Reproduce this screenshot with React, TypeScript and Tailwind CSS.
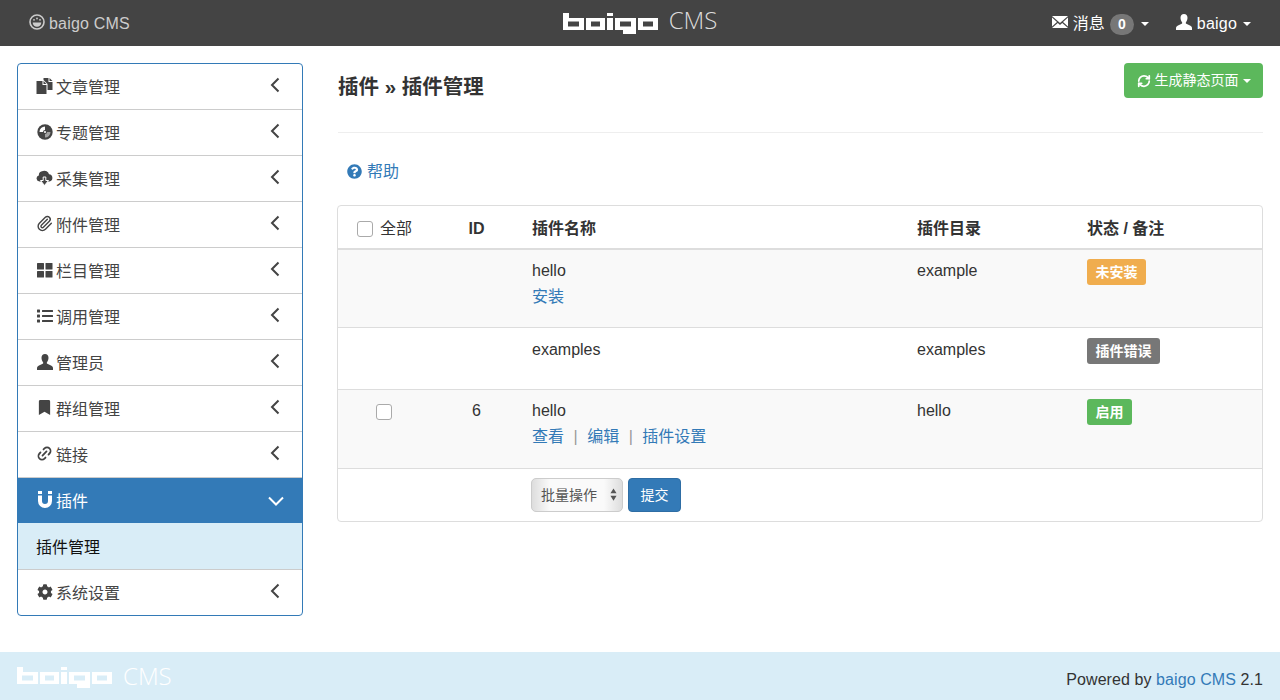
import React from "react";
import { FaBookmark, FaCog, FaQuestionCircle, FaList } from "react-icons/fa";
import { Paperclip, RefreshCw, Link2 } from "lucide-react";

function Logo({ className }: { className: string }) {
  const d =
    "M0 0h6v5h15v12H0z M5 8.500v5h11v-5z " +
    "M23 5h19v12H23z M28 8.500v5h9v-5z " +
    "M44 0h6v3h-6z M44 5h6v12h-6z " +
    "M52 5h21v16H60v-4h-8z M57 8.500v5h11v-5z " +
    "M75 5h20v12H75z M80 8.500v5h10v-5z";
  return (
    <svg viewBox="0 0 95 21" width="95" height="21" className={className}>
      <path d={d} fill="currentColor" fillRule="evenodd" />
    </svg>
  );
}

const Duplicate = () => (
  <svg viewBox="0 0 16 16" className="w-[17px] h-[16px]" fill="currentColor">
    <path d="M0 3h6v4h4v9H0z" />
    <path d="M7 3l3 3H7z" />
    <path d="M7 0h5v4h4v8h-5V6L7 2z" />
    <path d="M13 0l3 3h-3z" />
  </svg>
);
const Disc = () => (
  <svg viewBox="0 0 16 16" className="w-[16px] h-[16px]">
    <circle cx="8" cy="8" r="7.700" fill="currentColor" />
    <path d="M8 2.500A5.500 5.500 0 0 0 2.500 8H6a2 2 0 0 1 2-2z" fill="#fff" />
    <path d="M8 13.500A5.500 5.500 0 0 0 13.500 8H10a2 2 0 0 1-2 2z" fill="#fff" opacity="0.500" />
    <circle cx="8" cy="8" r="1" fill="#fff" />
  </svg>
);
const CloudDown = () => (
  <svg viewBox="0 0 17 16" className="w-[17px] h-[16px]">
    <path d="M3.500 11.500a3 3 0 0 1-.7-5.900A4.500 4.500 0 0 1 7 1a4.600 4.600 0 0 1 6 3.200 3.700 3.700 0 0 1 .5 7.300z" fill="currentColor" />
    <path d="M4.500 10.500h2.700V7h2.600v3.500h2.700L8.500 15.500z" fill="currentColor" stroke="#fff" strokeWidth="1" />
  </svg>
);
const Grid = () => (
  <svg viewBox="0 0 16 16" className="w-[16px] h-[16px]" fill="currentColor">
    <rect x="0" y="1" width="7" height="6.500" rx="0.500" />
    <rect x="8.500" y="1" width="7" height="6.500" rx="0.500" />
    <rect x="0" y="9" width="7" height="6.500" rx="0.500" />
    <rect x="8.500" y="9" width="7" height="6.500" rx="0.500" />
  </svg>
);
const Magnet = () => (
  <svg viewBox="0 0 14 17" className="w-[14px] h-[17px]" fill="currentColor">
    <path d="M0 0h4v3H0z M10 0h4v3h-4z" />
    <path d="M0 4.500h4V10a3 3 0 0 0 6 0V4.500h4V10a7 7 0 0 1-14 0z" />
  </svg>
);
const Envelope = () => (
  <svg viewBox="0 0 16 12" className="w-[16px] h-[12px]" fill="currentColor">
    <path d="M0 0h16L8 7z" />
    <path d="M0 1.500V10.500L5 6z" />
    <path d="M16 1.500V10.500L11 6z" />
    <path d="M0 12l5.800-5L8 9l2.200-2L16 12z" />
  </svg>
);
const User = ({ className }: { className: string }) => (
  <svg viewBox="0 0 16 16" className={className} fill="currentColor">
    <path d="M8 0c2.200 0 3.500 1.500 3.500 3.800 0 1.800-.7 3.500-1.500 4.400-.4.500-.3 1.200.3 1.500l3.700 1.800c1 .5 2 1.300 2 2.500V16H0v-2c0-1.200 1-2 2-2.500l3.700-1.800c.6-.3.700-1 .3-1.500-.8-.9-1.500-2.600-1.500-4.400C4.500 1.500 5.800 0 8 0z" />
  </svg>
);
const Dashboard = () => (
  <svg viewBox="0 0 16 16" className="w-[16px] h-[16px]" fill="none" stroke="currentColor">
    <circle cx="8" cy="8" r="7" strokeWidth="1.600" />
    <path d="M3.700 8.500h8.600a4.300 4.300 0 0 1-8.600 0z" fill="currentColor" stroke="none" />
    <circle cx="5" cy="5.800" r="0.900" fill="currentColor" stroke="none" />
    <circle cx="8" cy="4.500" r="0.900" fill="currentColor" stroke="none" />
    <circle cx="11" cy="5.800" r="0.900" fill="currentColor" stroke="none" />
  </svg>
);

const Caret = ({ className = "" }: { className?: string }) => (
  <span className={`inline-block w-0 h-0 border-x-[4px] border-x-transparent border-t-[4px] border-t-current ${className}`} />
);

const ChevronLeft = () => (
  <svg viewBox="0 0 10 16" className="w-[10px] h-[16px]" fill="none" stroke="#444" strokeWidth="2">
    <path d="M8.500 1.500L2 8l6.500 6.500" />
  </svg>
);
const ChevronDown = () => (
  <svg viewBox="0 0 16 10" className="w-[16px] h-[10px]" fill="none" stroke="#fff" strokeWidth="2">
    <path d="M1 1.500L8 8.500l7-7" />
  </svg>
);

const menu: { icon: React.ReactNode; label: string }[] = [
  { icon: <Duplicate />, label: "文章管理" },
  { icon: <Disc />, label: "专题管理" },
  { icon: <CloudDown />, label: "采集管理" },
  { icon: <Paperclip className="w-[17px] h-[17px]" strokeWidth={2} />, label: "附件管理" },
  { icon: <Grid />, label: "栏目管理" },
  { icon: <FaList className="w-[16px] h-[16px]" />, label: "调用管理" },
  { icon: <User className="w-[16px] h-[16px]" />, label: "管理员" },
  { icon: <FaBookmark className="w-[13px] h-[15px]" />, label: "群组管理" },
  { icon: <Link2 className="w-[17px] h-[17px] -rotate-[45deg]" strokeWidth={2.5} />, label: "链接" },
];

function MenuItem({ icon, label }: { icon: React.ReactNode; label: string }) {
  return (
    <div className="h-[46px] border-b border-[#ccc] flex items-center pl-[18px] pr-[22px] text-[#444]">
      <span className="w-[17px] flex justify-center shrink-0 -mt-[2px]">{icon}</span>
      <span className="ml-[3px] flex-1 pt-[2px]">{label}</span>
      <span className="-mt-[4px]"><ChevronLeft /></span>
    </div>
  );
}

const Sep = () => <span className="text-[#999] mx-[9.5px]">|</span>;

function Badge({ color, children }: { color: string; children: React.ReactNode }) {
  return (
    <span className={`inline-block h-[26px] leading-[26px] px-[8.5px] rounded-[3px] text-white text-[14px] font-bold ${color}`}>
      {children}
    </span>
  );
}

export default function App() {
  return (
    <div className="min-h-[700px] flex flex-col bg-white text-[16px] text-[#333] font-['Liberation_Sans','Noto_Sans_CJK_SC',sans-serif]">
      <header className="h-[46px] bg-[#444] flex items-center relative text-[#ddd] shrink-0">
        <div className="flex items-center pl-[29px] gap-[4px] text-[#ccc] flex-1">
          <span className="-mt-[2px]"><Dashboard /></span>
          <span className="pt-[1px] tracking-[0.2px]">baigo CMS</span>
        </div>
        <div className="flex items-center text-white">
          <Logo className="block mt-[1px]" />
          <span className="ml-[11px] text-[24px] font-light font-['Open_Sans',sans-serif] text-[#ddd] -mt-[7px]">CMS</span>
        </div>
        <div className="flex-1 flex justify-end items-center pr-[29px] text-white">
          <span className="-mt-[3px]"><Envelope /></span>
          <span className="ml-[5px] pt-[2px]">消息</span>
          <span className="ml-[5px] w-[24px] h-[21px] rounded-full bg-[#777] text-[14px] font-bold flex items-center justify-center mt-[2px]">0</span>
          <Caret className="ml-[7px] mt-[2px]" />
          <span className="ml-[27px] -mt-[3px]"><User className="w-[16px] h-[16px]" /></span>
          <span className="ml-[5px] pt-[2px] tracking-[0.2px]">baigo</span>
          <Caret className="ml-[6px] mt-[2px]" />
        </div>
      </header>

      <div className="flex-1 flex items-start pt-[17px] px-[17px] gap-[35px]">
        <nav className="w-[286px] shrink-0 border border-[#337ab7] rounded-[4px] overflow-hidden">
          {menu.map((m) => (
            <MenuItem key={m.label} icon={m.icon} label={m.label} />
          ))}
          <div className="h-[45px] bg-[#337ab7] text-white flex items-center pl-[18px] pr-[18px]">
            <span className="w-[17px] flex justify-center shrink-0 -mt-[2px]"><Magnet /></span>
            <span className="ml-[3px] flex-1 pt-[2px]">插件</span>
            <ChevronDown />
          </div>
          <div className="h-[47px] bg-[#d9edf7] border-b border-[#ccc] flex items-center pl-[18px] text-[#111] pt-[4px]">插件管理</div>
          <div className="h-[45px] flex items-center pl-[18px] pr-[22px] text-[#444]">
            <span className="w-[17px] flex justify-center shrink-0 -mt-[2px]"><FaCog className="w-[16px] h-[16px]" /></span>
            <span className="ml-[3px] flex-1 pt-[2px]">系统设置</span>
            <span className="-mt-[4px]"><ChevronLeft /></span>
          </div>
        </nav>

        <main className="flex-1 min-w-0">
          <div className="h-[70px] border-b border-[#eee] flex justify-between items-start">
            <h1 className="mt-[10px] text-[20.5px] leading-[28px] font-bold text-[#333]">插件 » 插件管理</h1>
            <button className="w-[139px] h-[35px] rounded-[4px] bg-[#5cb85c] text-white text-[14px] flex items-center justify-center">
              <RefreshCw className="w-[14px] h-[14px]" strokeWidth={3} />
              <span className="ml-[4px]">生成静态页面</span>
              <Caret className="ml-[4px]" />
            </button>
          </div>

          <div className="mt-[26px] pl-[9px] flex items-center text-[#337ab7] leading-[26px]">
            <span className="-mt-[2px]"><FaQuestionCircle className="w-[15px] h-[15px]" /></span>
            <span className="ml-[5px]">帮助</span>
          </div>

          <div className="mt-[20px] -ml-px border border-[#ddd] rounded-[4px] overflow-hidden">
            <table className="w-full table-fixed">
              <colgroup>
                <col className="w-[91px]" />
                <col className="w-[95px]" />
                <col className="w-[385px]" />
                <col className="w-[170px]" />
                <col />
              </colgroup>
              <thead>
                <tr className="h-[43px] border-b-2 border-[#ddd] font-bold text-left">
                  <th className="font-normal pt-[3px]">
                    <label className="flex items-center pl-[19px] gap-[7px]">
                      <span className="w-[16px] h-[16px] rounded-[3px] border border-[#aaa] bg-white" />
                      <span>全部</span>
                    </label>
                  </th>
                  <th className="text-center pt-[3px]">ID</th>
                  <th className="px-[8px] pt-[3px]">插件名称</th>
                  <th className="px-[8px] pt-[3px]">插件目录</th>
                  <th className="px-[8px] pt-[3px]">状态 / 备注</th>
                </tr>
              </thead>
              <tbody className="leading-[26px] align-top">
                <tr className="h-[78px] bg-[#f9f9f9] border-b border-[#ddd]">
                  <td />
                  <td />
                  <td className="px-[8px] pt-[8px]">
                    <div>hello</div>
                    <div className="text-[#337ab7]">安装</div>
                  </td>
                  <td className="px-[8px] pt-[8px]">example</td>
                  <td className="px-[8px] pt-[9px]"><Badge color="bg-[#f0ad4e]">未安装</Badge></td>
                </tr>
                <tr className="h-[62px] border-b border-[#ddd]">
                  <td />
                  <td />
                  <td className="px-[8px] pt-[9px]">examples</td>
                  <td className="px-[8px] pt-[9px]">examples</td>
                  <td className="px-[8px] pt-[10px]"><Badge color="bg-[#777]">插件错误</Badge></td>
                </tr>
                <tr className="h-[79px] bg-[#f9f9f9] border-b border-[#ddd]">
                  <td className="pt-[14px]">
                    <span className="block ml-[38px] w-[16px] h-[16px] rounded-[3px] border border-[#aaa] bg-white" />
                  </td>
                  <td className="text-center pt-[8px]">6</td>
                  <td className="px-[8px] pt-[8px]">
                    <div>hello</div>
                    <div className="text-[#337ab7]">
                      <span>查看</span><Sep /><span>编辑</span><Sep /><span>插件设置</span>
                    </div>
                  </td>
                  <td className="px-[8px] pt-[8px]">hello</td>
                  <td className="px-[8px] pt-[9px]"><Badge color="bg-[#5cb85c]">启用</Badge></td>
                </tr>
                <tr className="h-[53px]">
                  <td />
                  <td />
                  <td colSpan={3} className="px-[7px] pt-[9px]">
                    <div className="flex items-center gap-[5px]">
                      <div className="relative w-[92px] h-[34px]">
                        <select className="appearance-none w-full h-full pl-[9px] rounded-[5px] border border-[#ccc] text-[14px] text-[#555] bg-[linear-gradient(90deg,#ddd,#fafafa_20%,#fafafa_80%,#ddd)]">
                          <option>批量操作</option>
                        </select>
                        <svg viewBox="0 0 8 14" className="absolute right-[6px] top-[10px] w-[7px] h-[13px] pointer-events-none" fill="#555">
                          <path d="M4 0l3.500 5.500h-7z M4 14l3.500-5.500h-7z" />
                        </svg>
                      </div>
                      <button className="w-[53px] h-[34px] rounded-[4px] bg-[#337ab7] border border-[#2e6da4] text-white text-[14px]">提交</button>
                    </div>
                  </td>
                </tr>
              </tbody>
            </table>
          </div>
        </main>
      </div>

      <footer className="h-[48px] bg-[#d9edf7] flex items-center justify-between pl-[17px] pr-[17px] shrink-0">
        <div className="flex items-center text-white">
          <Logo className="block mt-[2px]" />
          <span className="ml-[11px] text-[24px] font-light font-['Open_Sans',sans-serif] -mt-[1px]">CMS</span>
        </div>
        <div className="pt-[7px] tracking-[0.08px]">
          Powered by <span className="text-[#337ab7]">baigo CMS</span> 2.1
        </div>
      </footer>
    </div>
  );
}
